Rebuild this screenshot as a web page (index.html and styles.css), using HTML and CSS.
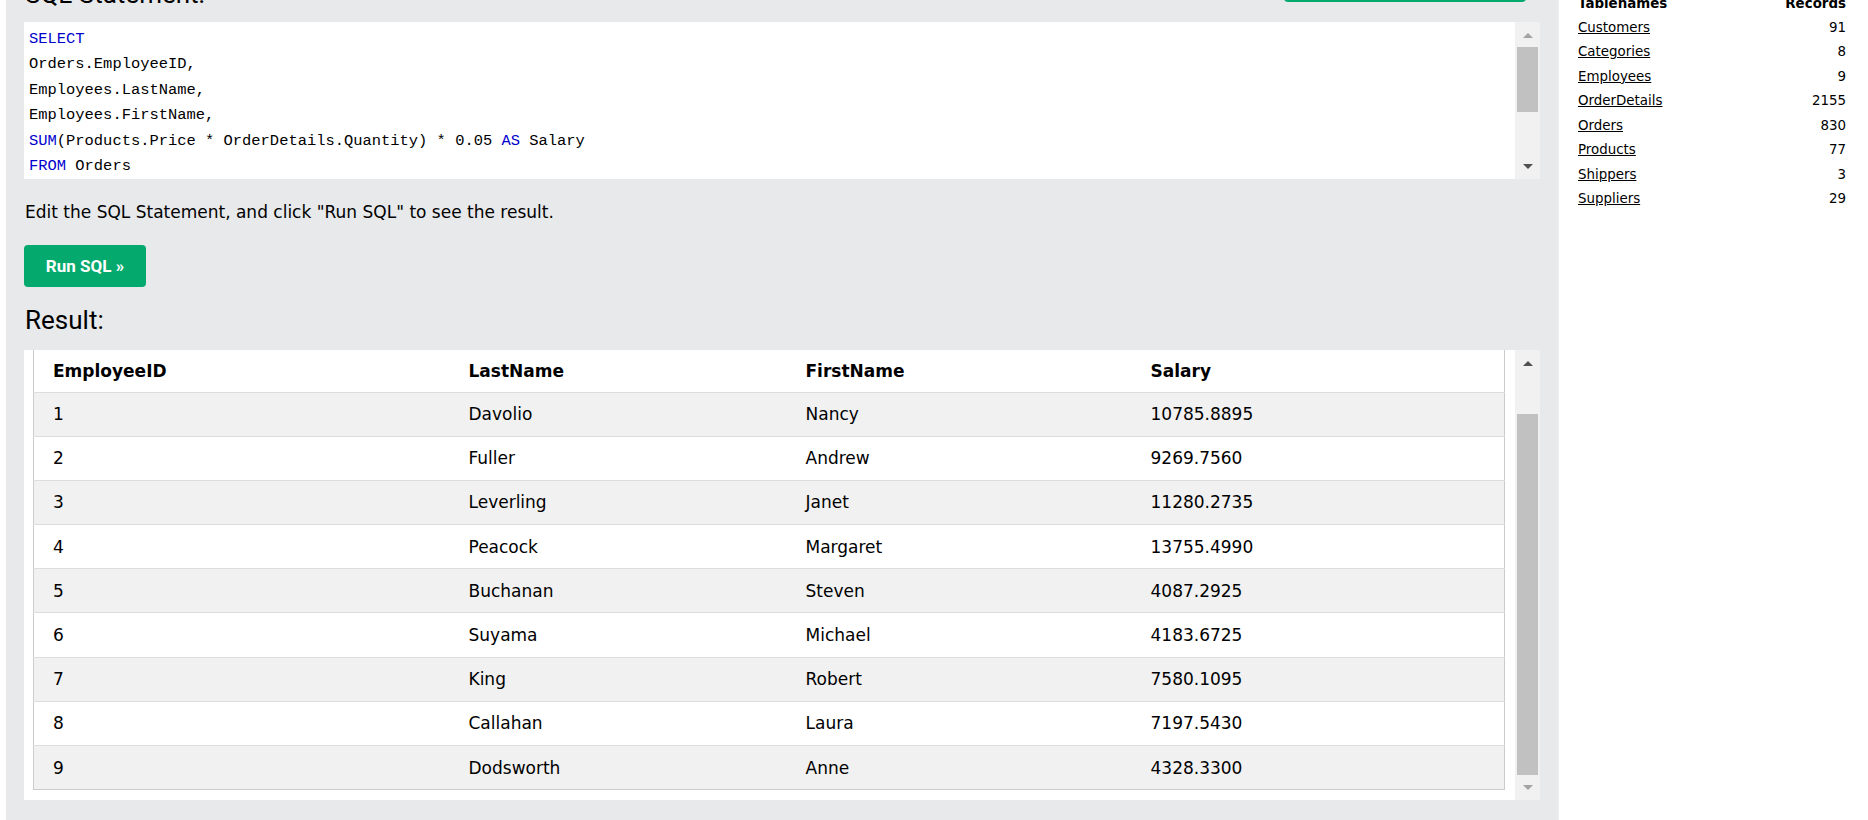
FILE: index.html
```html
<!DOCTYPE html>
<html lang="en">
<head>
<meta charset="utf-8">
<title>SQL Tryit Editor</title>
<link rel="stylesheet" href="styles.css">
</head>
<body>
<main class="panel">
  <div class="panel-head">
    <h2 class="panel-title">SQL Statement:</h2>
    <span class="get-server">Get your own SQL server</span>
  </div>

  <div class="editor">
    <div class="code">
      <div class="ln"><span class="kw">SELECT</span></div>
      <div class="ln">Orders.EmployeeID,</div>
      <div class="ln">Employees.LastName,</div>
      <div class="ln">Employees.FirstName,</div>
      <div class="ln"><span class="kw">SUM</span>(Products.Price * OrderDetails.Quantity) * 0.05 <span class="kw">AS</span> Salary</div>
      <div class="ln"><span class="kw">FROM</span> Orders</div>
    </div>
    <div class="sb sb-editor">
      <span class="arrow-up light"></span>
      <span class="thumb"></span>
      <span class="sb-fill"></span>
      <span class="arrow-down dark"></span>
    </div>
  </div>

  <p class="note">Edit the SQL Statement, and click "Run SQL" to see the result.</p>

  <button class="run-btn" type="button">Run SQL »</button>

  <h3 class="result-title">Result:</h3>

  <div class="result">
    <div class="result-scroll">
      <table class="grid">
        <thead>
          <tr><th class="c1">EmployeeID</th><th class="c2">LastName</th><th class="c3">FirstName</th><th class="c4">Salary</th></tr>
        </thead>
        <tbody>
          <tr><td>1</td><td>Davolio</td><td>Nancy</td><td>10785.8895</td></tr>
          <tr><td>2</td><td>Fuller</td><td>Andrew</td><td>9269.7560</td></tr>
          <tr><td>3</td><td>Leverling</td><td>Janet</td><td>11280.2735</td></tr>
          <tr><td>4</td><td>Peacock</td><td>Margaret</td><td>13755.4990</td></tr>
          <tr><td>5</td><td>Buchanan</td><td>Steven</td><td>4087.2925</td></tr>
          <tr><td>6</td><td>Suyama</td><td>Michael</td><td>4183.6725</td></tr>
          <tr><td>7</td><td>King</td><td>Robert</td><td>7580.1095</td></tr>
          <tr><td>8</td><td>Callahan</td><td>Laura</td><td>7197.5430</td></tr>
          <tr><td>9</td><td>Dodsworth</td><td>Anne</td><td>4328.3300</td></tr>
        </tbody>
      </table>
    </div>
    <div class="sb sb-result">
      <span class="arrow-up dark"></span>
      <span class="thumb"></span>
      <span class="sb-fill"></span>
      <span class="arrow-down light"></span>
    </div>
  </div>
</main>

<aside class="sidebar">
  <table class="tables">
    <thead>
      <tr><th class="tn">Tablenames</th><th class="rc">Records</th></tr>
    </thead>
    <tbody>
      <tr><td><a href="#">Customers</a></td><td class="rc">91</td></tr>
      <tr><td><a href="#">Categories</a></td><td class="rc">8</td></tr>
      <tr><td><a href="#">Employees</a></td><td class="rc">9</td></tr>
      <tr><td><a href="#">OrderDetails</a></td><td class="rc">2155</td></tr>
      <tr><td><a href="#">Orders</a></td><td class="rc">830</td></tr>
      <tr><td><a href="#">Products</a></td><td class="rc">77</td></tr>
      <tr><td><a href="#">Shippers</a></td><td class="rc">3</td></tr>
      <tr><td><a href="#">Suppliers</a></td><td class="rc">29</td></tr>
    </tbody>
  </table>
</aside>
</body>
</html>
```

FILE: styles.css
```css
* { box-sizing: border-box; }

html, body {
  margin: 0;
  padding: 0;
  background: #ffffff;
}

body {
  display: flex;
  width: 1868px;
  height: 820px;
  overflow: hidden;
  font-family: "DejaVu Sans", Verdana, sans-serif;
  font-size: 17px;
  color: #000;
}

/* ---------- left gray panel ---------- */
.panel {
  flex: 0 0 1551px;
  margin-left: 6px;
  background: #e7e9eb;
  padding: 0 18px 0 18px;
  display: block;
}

.panel-head {
  display: flex;
  justify-content: space-between;
  align-items: flex-end;
  height: 40px;
  margin-top: -31.5px;
}

.panel-title {
  margin: 0 0 0 1px;
  font-family: Roboto, "Liberation Sans", sans-serif;
  font-weight: 400;
  font-size: 26px;
  line-height: 30px;
}

.get-server {
  display: block;
  width: 242px;
  height: 40px;
  margin: 0 14px 7px 0;
  background: #04aa6d;
  border-radius: 4px;
  color: transparent;
  font-size: 1px;
}

/* ---------- editor ---------- */
.editor {
  display: flex;
  margin-top: 13.5px;
  height: 157px;
  background: #fff;
}

.code {
  flex: 1;
  overflow: hidden;
  padding: 4.5px 0 0 5px;
  font-family: "Liberation Mono", "DejaVu Sans Mono", monospace;
  font-size: 15.45px;
  line-height: 25.5px;
  color: #000;
}

.ln { white-space: pre; height: 25.5px; }

.kw { color: #0000cd; }

/* ---------- fake scrollbars ---------- */
.sb {
  flex: 0 0 25px;
  display: flex;
  flex-direction: column;
  align-items: center;
  background: #f1f1f1;
}

.sb .thumb {
  display: block;
  width: 21px;
  background: #c1c1c1;
}

.sb-fill { flex: 1; }

.arrow-up, .arrow-down {
  display: block;
  width: 0;
  height: 0;
  border-left: 5px solid transparent;
  border-right: 5px solid transparent;
}
.arrow-up.light { border-bottom: 5px solid #a3a3a3; }
.arrow-up.dark { border-bottom: 5px solid #505050; }
.arrow-down.light { border-top: 5px solid #a3a3a3; }
.arrow-down.dark { border-top: 5px solid #505050; }

.sb-editor .arrow-up { margin-top: 10.5px; }
.sb-editor .thumb { margin-top: 9.5px; height: 65px; }
.sb-editor .arrow-down { margin-bottom: 10.5px; }

.sb-result .arrow-up { margin-top: 10.5px; }
.sb-result .thumb { margin-top: 48.5px; height: 361px; }
.sb-result .arrow-down { margin-bottom: 10.5px; }

/* ---------- note & button ---------- */
.note {
  margin: 22px 0 0 1px;
  line-height: 22px;
  font-size: 17px;
}

.run-btn {
  display: block;
  margin-top: 22px;
  width: 122px;
  height: 42px;
  border: 0;
  border-radius: 4px;
  background: #04aa6d;
  color: #fff;
  font-family: Roboto, "Liberation Sans", sans-serif;
  font-weight: 700;
  font-size: 17px;
  padding: 0;
}

.result-title {
  margin: 18px 0 15px 1px;
  font-family: Roboto, "Liberation Sans", sans-serif;
  font-weight: 400;
  font-size: 26px;
  line-height: 30px;
}

/* ---------- result ---------- */
.result {
  display: flex;
  height: 450px;
  background: #fff;
}

.result-scroll {
  flex: 1;
  overflow: hidden;
  padding: 0 10px 0 9px;
}

.grid {
  width: 1471px;
  border-collapse: collapse;
  border-left: 1px solid #ccc;
  border-right: 1px solid #ccc;
  border-bottom: 1px solid #ccc;
  font-size: 17px;
  table-layout: fixed;
}

.grid .c1 { width: 416px; }
.grid .c2 { width: 337px; }
.grid .c3 { width: 345px; }
.grid .c4 { width: 373px; }

.grid th {
  text-align: left;
  font-weight: 700;
  height: 42px;
  padding: 0 0 0 19px;
  border-bottom: 1px solid #ddd;
  background: #fff;
}

.grid td {
  height: 44.2px;
  padding: 0 0 0 19px;
  border-bottom: 1px solid #ddd;
}

.grid tbody tr:nth-child(odd) td { background: #f1f1f1; }
.grid tbody tr:nth-child(even) td { background: #fff; }
.grid tbody tr:last-child td { border-bottom: 1px solid #ccc; }

/* ---------- sidebar ---------- */
.sidebar {
  flex: 0 0 311px;
  padding: 0 23px 0 20px;
  box-shadow: inset 1px 0 0 #eef0f1;
}

.tables {
  width: 100%;
  margin-top: -8.6px;
  border-collapse: collapse;
  font-size: 13.4px;
}

.tables th, .tables td {
  height: 24.43px;
  padding: 0;
  line-height: 16px;
}

.tables th { font-weight: 700; text-align: left; }
.tables .rc { text-align: right; }

.tables a {
  color: #000;
  text-decoration: underline;
}
```
